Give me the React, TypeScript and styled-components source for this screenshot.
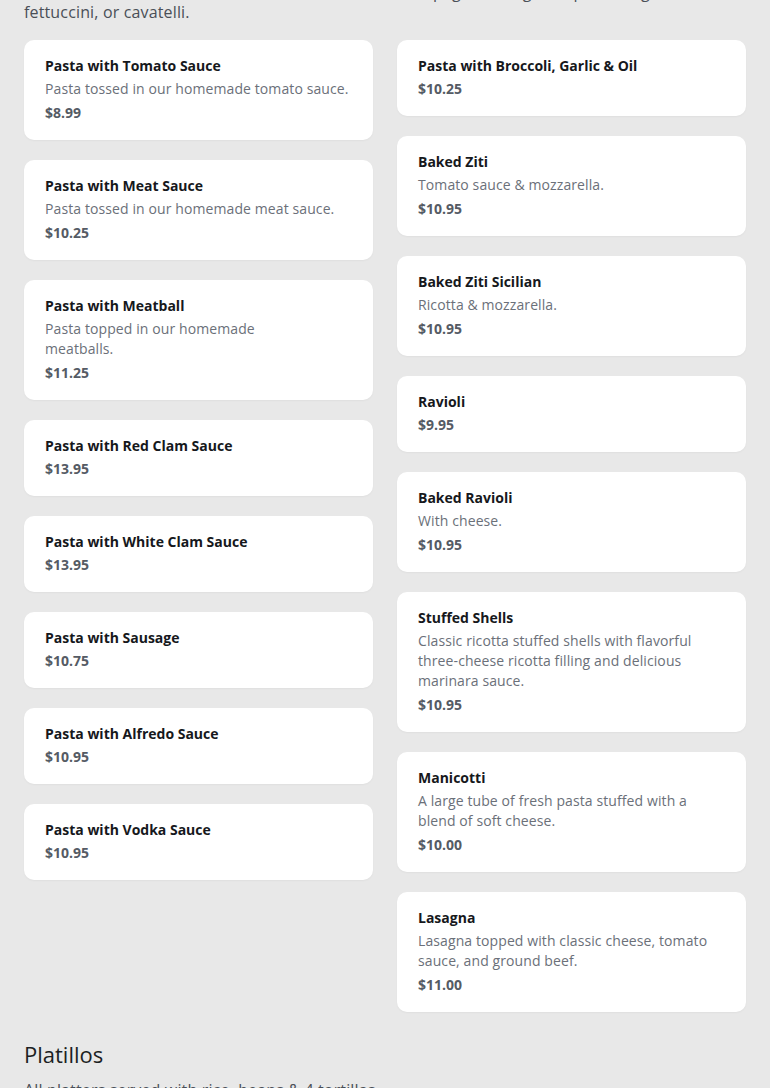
import React from "react";
import styled, { createGlobalStyle } from "styled-components";

type Dish = {
  name: string;
  description?: string;
  price: string;
};

const leftDishes: Dish[] = [
  { name: "Pasta with Tomato Sauce", description: "Pasta tossed in our homemade tomato sauce.", price: "$8.99" },
  { name: "Pasta with Meat Sauce", description: "Pasta tossed in our homemade meat sauce.", price: "$10.25" },
  { name: "Pasta with Meatball", description: "Pasta topped in our homemade\nmeatballs.", price: "$11.25" },
  { name: "Pasta with Red Clam Sauce", price: "$13.95" },
  { name: "Pasta with White Clam Sauce", price: "$13.95" },
  { name: "Pasta with Sausage", price: "$10.75" },
  { name: "Pasta with Alfredo Sauce", price: "$10.95" },
  { name: "Pasta with Vodka Sauce", price: "$10.95" },
];

const rightDishes: Dish[] = [
  { name: "Pasta with Broccoli, Garlic & Oil", price: "$10.25" },
  { name: "Baked Ziti", description: "Tomato sauce & mozzarella.", price: "$10.95" },
  { name: "Baked Ziti Sicilian", description: "Ricotta & mozzarella.", price: "$10.95" },
  { name: "Ravioli", price: "$9.95" },
  { name: "Baked Ravioli", description: "With cheese.", price: "$10.95" },
  {
    name: "Stuffed Shells",
    description: "Classic ricotta stuffed shells with flavorful three-cheese ricotta filling and delicious marinara sauce.",
    price: "$10.95",
  },
  { name: "Manicotti", description: "A large tube of fresh pasta stuffed with a blend of soft cheese.", price: "$10.00" },
  { name: "Lasagna", description: "Lasagna topped with classic cheese, tomato sauce, and ground beef.", price: "$11.00" },
];

const GlobalStyle = createGlobalStyle`
  html, body {
    margin: 0;
    padding: 0;
    background: #e8e8e8;
    overflow: hidden;
  }
  body {
    font-family: "Open Sans", "Liberation Sans", sans-serif;
  }
`;

// the page is scrolled a little: the section heading sits above the top edge
const Page = styled.main`
  padding: 0 24px;
  margin-top: -60px;
`;

const Section = styled.section`
  & + & {
    margin-top: 26px;
  }
`;

const SectionTitle = styled.h2`
  margin: 0 0 10px;
  font-size: 22px;
  font-weight: 400;
  line-height: 32px;
  color: #1c1f23;
`;

const Intro = styled.p`
  margin: 0 0 18px;
  font-size: 16px;
  line-height: 20px;
  letter-spacing: 0.15px;
  color: #4a4f57;
`;

const Columns = styled.div`
  display: grid;
  grid-template-columns: 1fr 1fr;
  gap: 24px;
  align-items: start;
`;

const Column = styled.div`
  display: flex;
  flex-direction: column;
  gap: 20px;
`;

const Card = styled.article`
  background: #ffffff;
  border-radius: 10px;
  padding: 16px 21px 17px;
  box-shadow: 0 1px 2px rgba(0, 0, 0, 0.04);
`;

const Name = styled.h3`
  margin: 0;
  font-size: 14px;
  font-weight: 700;
  line-height: 20px;
  color: #16181c;
`;

const Description = styled.p`
  margin: 3px 0;
  font-size: 14px;
  line-height: 20px;
  letter-spacing: 0.1px;
  white-space: pre-line;
  color: #6b7079;
`;

const Price = styled.div`
  margin-top: 2px;
  font-size: 14px;
  font-weight: 700;
  line-height: 21px;
  color: #555b64;
`;

function DishCard({ name, description, price }: Dish) {
  return (
    <Card>
      <Name>{name}</Name>
      {description && <Description>{description}</Description>}
      <Price>{price}</Price>
    </Card>
  );
}

export default function App() {
  return (
    <>
      <GlobalStyle />
      <Page>
        <Section>
          <SectionTitle>Pasta</SectionTitle>
          <Intro>
            All dishes are made fresh to order with the choice of spaghetti, linguine, penne, rigatoni, ziti,
            fettuccini, or cavatelli.
          </Intro>
          <Columns>
            <Column>
              {leftDishes.map((d) => (
                <DishCard key={d.name} {...d} />
              ))}
            </Column>
            <Column>
              {rightDishes.map((d) => (
                <DishCard key={d.name} {...d} />
              ))}
            </Column>
          </Columns>
        </Section>
        <Section>
          <SectionTitle>Platillos</SectionTitle>
          <Intro>All platters served with rice, beans &amp; 4 tortillas.</Intro>
        </Section>
      </Page>
    </>
  );
}
